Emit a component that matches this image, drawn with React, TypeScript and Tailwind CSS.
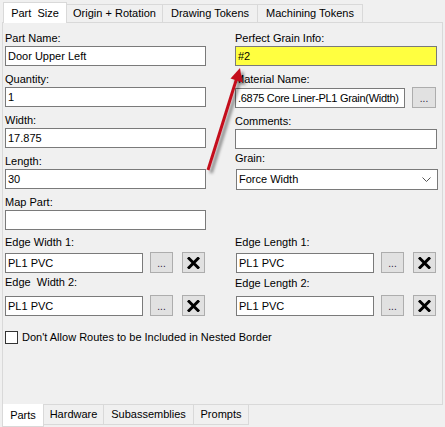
import React from 'react';

const topTabs = [
  { label: 'Origin + Rotation', w: 'w-[96px]' },
  { label: 'Drawing Tokens', w: 'w-[95px]' },
  { label: 'Machining Tokens', w: 'w-[105px]' },
];

const bottomTabs = [
  { label: 'Hardware', w: 'w-[60px]' },
  { label: 'Subassemblies', w: 'w-[90px]' },
  { label: 'Prompts', w: 'w-[55px]' },
];

const Label: React.FC<{ text: string; className?: string }> = ({ text, className = '' }) => (
  <div className={`h-[16px] leading-[16px] whitespace-pre ${className}`}>{text}</div>
);

const TextBox: React.FC<{ value?: string; className?: string; bg?: string }> = ({
  value = '',
  className = '',
  bg = 'bg-white',
}) => (
  <div
    className={`h-[20px] border border-[#7a7a7a] ${bg} pl-[2px] leading-[18px] whitespace-nowrap overflow-hidden ${className}`}
  >
    {value}
  </div>
);

const DotsButton: React.FC<{ className?: string }> = ({ className = '' }) => (
  <div
    className={`h-[21px] border border-[#adadad] bg-[#e1e1e1] flex items-end justify-center pb-[3px] text-[10px] leading-none text-[#2a1a3a] ${className}`}
  >
    ...
  </div>
);

const ClearButton: React.FC = () => (
  <div className="w-[23px] h-[21px] ml-[9px] border border-[#adadad] bg-[#e1e1e1] flex items-center justify-center">
    <svg width="13" height="12" viewBox="0 0 13 12">
      <path d="M2 1.5 L11 10.5 M11 1.5 L2 10.5" stroke="#000" strokeWidth="3" strokeLinecap="square" />
    </svg>
  </div>
);

const EdgeRow: React.FC<{ value: string; className?: string }> = ({ value, className = '' }) => (
  <div className={`flex items-center ${className}`}>
    <TextBox value={value} className="w-[138px]" />
    <DotsButton className="w-[23px] ml-[7px]" />
    <ClearButton />
  </div>
);

export default function App() {
  return (
    <div className="relative w-[445px] h-[427px] bg-[#f0f0f0] overflow-hidden font-['Liberation_Sans',Arial,sans-serif] text-[11px] text-black flex flex-col">
      {/* Top tabs */}
      <div className="flex items-end h-[22px] pl-[3px]">
        <div className="relative z-10 -mb-px w-[64px] h-[21px] bg-white border border-b-0 border-[#d9d9d9] flex items-center justify-center whitespace-pre">
          {'Part  Size'}
        </div>
        {topTabs.map((t) => (
          <div
            key={t.label}
            className={`${t.w} h-[18px] border border-l-0 border-b-0 border-[#d9d9d9] flex items-center justify-center`}
          >
            {t.label}
          </div>
        ))}
      </div>

      {/* Panel */}
      <div className="mx-[2px] h-[383px] border border-[#d9d9d9] bg-[#f0f0f0] pl-[2px] pt-[7px]">
        <div className="flex">
          {/* Left column */}
          <div className="w-[201px] flex flex-col">
            <Label text="Part Name:" />
            <TextBox value="Door Upper Left" />
            <Label text="Quantity:" className="mt-[5px]" />
            <TextBox value="1" />
            <Label text="Width:" className="mt-[5px]" />
            <TextBox value="17.875" />
            <Label text="Length:" className="mt-[5px]" />
            <TextBox value="30" />
            <Label text="Map Part:" className="mt-[5px]" />
            <TextBox />
          </div>

          {/* Right column */}
          <div className="w-[203px] ml-[29px] flex flex-col">
            <Label text="Perfect Grain Info:" />
            <TextBox value="#2" bg="bg-[#ffff40]" className="h-[19px] w-[202px]" />
            <Label text="Material Name:" className="mt-[5px]" />
            <div className="flex items-center">
              <TextBox
                value=".6875 Core Liner-PL1 Grain(Width)"
                className="w-[170px] h-[19px] tracking-[-0.3px]"
              />
              <DotsButton className="w-[24px] ml-[7px]" />
            </div>
            <Label text="Comments:" className="mt-[5px]" />
            <TextBox className="w-[202px]" />
            <Label text="Grain:" className="mt-[1px]" />
            <div className="mt-[3px] ml-[1px] w-[202px] h-[21px] border border-[#7a7a7a] bg-white pl-[2px] flex items-center justify-between pr-[6px]">
              <span>Force Width</span>
              <svg width="9" height="5" viewBox="0 0 9 5">
                <path d="M0.5 0.5 L4.5 4.5 L8.5 0.5" fill="none" stroke="#555" strokeWidth="1" />
              </svg>
            </div>
          </div>
        </div>

        {/* Edge banding */}
        <div className="flex mt-[4px]">
          <div className="w-[201px] flex flex-col">
            <Label text="Edge Width 1:" />
            <EdgeRow value="PL1 PVC" className="mt-[2px]" />
            <Label text="Edge  Width 2:" className="mt-[1px]" />
            <EdgeRow value="PL1 PVC" className="mt-[5px]" />
          </div>
          <div className="w-[203px] ml-[29px] flex flex-col">
            <Label text="Edge Length 1:" />
            <EdgeRow value="PL1 PVC" className="mt-[2px] pl-[1px]" />
            <Label text="Edge Length 2:" className="mt-[2px]" />
            <EdgeRow value="PL1 PVC" className="mt-[4px] pl-[1px]" />
          </div>
        </div>

        <div className="flex items-center mt-[15px] h-[13px]">
          <div className="w-[13px] h-[13px] border border-[#333] bg-white" />
          <span className="ml-[4px]">Don't Allow Routes to be Included in Nested Border</span>
        </div>
      </div>

      {/* Bottom tabs */}
      <div className="flex items-start pl-[2px]">
        <div className="relative z-10 -mt-px w-[42px] h-[23px] bg-white border border-t-0 border-[#d9d9d9] flex items-center justify-center">
          Parts
        </div>
        {bottomTabs.map((t) => (
          <div
            key={t.label}
            className={`${t.w} h-[20px] border border-l-0 border-t-0 border-[#d9d9d9] flex items-center justify-center`}
          >
            {t.label}
          </div>
        ))}
      </div>

      {/* Annotation arrow */}
      <svg className="absolute left-0 top-0 pointer-events-none" width="445" height="427" viewBox="0 0 445 427">
        <defs>
          <filter id="shadow" x="-50%" y="-50%" width="200%" height="200%">
            <feDropShadow dx="3" dy="3" stdDeviation="1.5" floodColor="#000" floodOpacity="0.45" />
          </filter>
        </defs>
        <g filter="url(#shadow)">
          <line x1="208" y1="170" x2="236.5" y2="79" stroke="#c4101c" strokeWidth="3" />
          <polygon points="240,68 230.5,78.5 242.3,82.3" fill="#c4101c" />
        </g>
      </svg>
    </div>
  );
}
